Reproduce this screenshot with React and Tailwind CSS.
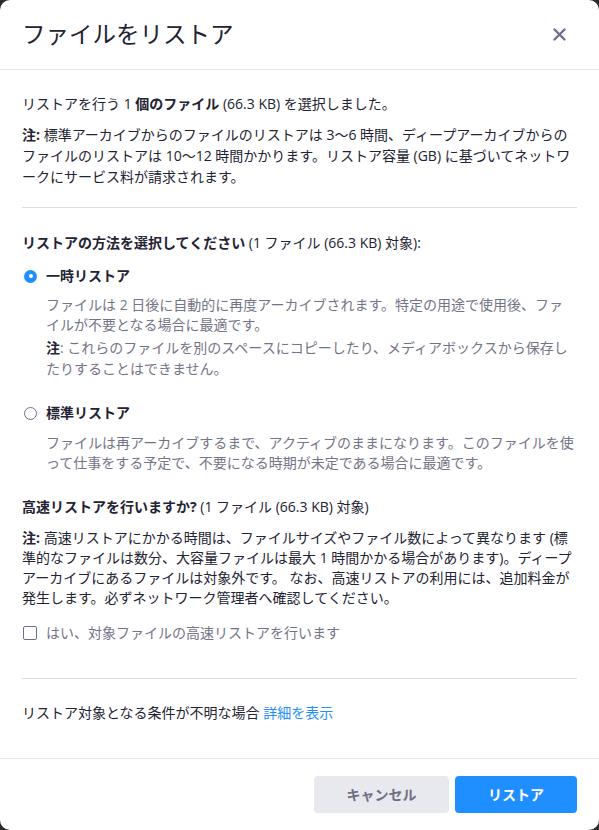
import React, { useState } from "react";

export default function App() {
  const [mode, setMode] = useState("temp");
  const [fast, setFast] = useState(false);

  return (
    <div
      className="h-[830px] w-full bg-[#2b2b2b] text-[#232333]"
      style={{ fontFamily: '"Open Sans", "Noto Sans CJK JP", sans-serif' }}
    >
      <div className="flex h-full flex-col rounded-[10px] bg-white">
        {/* Header */}
        <div className="flex h-[70px] items-center justify-between border-b border-[#e5e5ec] pl-[22px] pr-[33px]">
          <h1 className="text-[23.5px] font-normal text-[#232333]">ファイルをリストア</h1>
          <button className="text-[#6e6e8c]">
            <svg width="13" height="13" viewBox="0 0 13 13">
              <path d="M1.5 1.5l10 10M11.5 1.5l-10 10" stroke="currentColor" strokeWidth="2.4" strokeLinecap="round" />
            </svg>
          </button>
        </div>

        {/* Body */}
        <div className="flex-1 px-[22px] pt-6 text-[14px] leading-5">
          <p>
            リストアを行う 1 <b>個のファイル</b> (66.3 KB) を選択しました。
          </p>
          <p className="mt-[10px] leading-[21px]">
            <b>注:</b> 標準アーカイブからのファイルのリストアは 3〜6 時間、ディープアーカイブからのファイルのリストアは 10〜12 時間かかります。リストア容量 (GB) に基づいてネットワークにサービス料が請求されます。
          </p>

          <div className="mt-5 border-t border-[#dcdce2]" />

          <p className="mt-[25px]">
            <b>リストアの方法を選択してください</b> (1 ファイル (66.3 KB) 対象):
          </p>

          {/* Option 1 */}
          <label className="mt-[13px] flex cursor-pointer items-center" onClick={() => setMode("temp")}>
            <span className="ml-[2px] mr-[9px] flex h-[13px] w-[13px] items-center justify-center">
              {mode === "temp" ? (
                <span className="flex h-[13px] w-[13px] items-center justify-center rounded-full bg-[#1f8fff]">
                  <span className="h-[4px] w-[4px] rounded-full bg-white" />
                </span>
              ) : (
                <span className="h-[13px] w-[13px] rounded-full border border-[#6e6e8c]" />
              )}
            </span>
            <b className="text-[#232333]">一時リストア</b>
          </label>
          <div className="ml-6 text-[#747487]">
            <p className="mt-[9px]">
              ファイルは 2 日後に自動的に再度アーカイブされます。特定の用途で使用後、ファイルが不要となる場合に最適です。
            </p>
            <p className="mt-[2px] leading-[21px]">
              <b className="text-[#232333]">注</b>: これらのファイルを別のスペースにコピーしたり、メディアボックスから保存したりすることはできません。
            </p>
          </div>

          {/* Option 2 */}
          <label className="mt-[24px] flex cursor-pointer items-center" onClick={() => setMode("std")}>
            <span className="ml-[2px] mr-[9px] flex h-[13px] w-[13px] items-center justify-center">
              {mode === "std" ? (
                <span className="flex h-[13px] w-[13px] items-center justify-center rounded-full bg-[#1f8fff]">
                  <span className="h-[4px] w-[4px] rounded-full bg-white" />
                </span>
              ) : (
                <span className="h-[13px] w-[13px] rounded-full border border-[#6e6e8c]" />
              )}
            </span>
            <b className="text-[#232333]">標準リストア</b>
          </label>
          <p className="ml-6 mt-[10px] text-[#747487]">
            ファイルは再アーカイブするまで、アクティブのままになります。このファイルを使って仕事をする予定で、不要になる時期が未定である場合に最適です。
          </p>

          {/* Fast restore */}
          <p className="mt-[24px]">
            <b>高速リストアを行いますか?</b> (1 ファイル (66.3 KB) 対象)
          </p>
          <p className="mt-[11px]">
            <b>注:</b> 高速リストアにかかる時間は、ファイルサイズやファイル数によって異なります (標準的なファイルは数分、大容量ファイルは最大 1 時間かかる場合があります)。ディープアーカイブにあるファイルは対象外です。 なお、高速リストアの利用には、追加料金が発生します。必ずネットワーク管理者へ確認してください。
          </p>
          <label className="mt-[15px] flex cursor-pointer items-center text-[#747487]" onClick={() => setFast(!fast)}>
            <span
              className={`ml-[1px] mr-[9px] flex h-[14px] w-[14px] items-center justify-center rounded-[2px] border ${
                fast ? "border-[#1f8fff] bg-[#1f8fff]" : "border-[#6e6e8c] bg-white"
              }`}
            >
              {fast && (
                <svg width="10" height="10" viewBox="0 0 10 10">
                  <path d="M1.5 5l2.5 2.5 4.5-5" stroke="white" strokeWidth="1.6" fill="none" />
                </svg>
              )}
            </span>
            はい、対象ファイルの高速リストアを行います
          </label>

          <div className="mt-[35px] border-t border-[#dcdce2]" />

          <p className="mt-[24px]">
            リストア対象となる条件が不明な場合 <a href="#" className="text-[#1f8fff]">詳細を表示</a>
          </p>
        </div>

        {/* Footer */}
        <div className="flex h-[72px] items-center justify-end gap-[6px] border-t border-[#e5e5ec] px-[22px] pb-[1px]">
          <button className="h-[37px] w-[135px] rounded-[4px] bg-[#e8e8ef] text-[14px] font-bold text-[#6e6e80]">
            キャンセル
          </button>
          <button className="h-[37px] w-[122px] rounded-[4px] bg-[#1f8fff] text-[14px] font-bold text-white">
            リストア
          </button>
        </div>
      </div>
    </div>
  );
}
